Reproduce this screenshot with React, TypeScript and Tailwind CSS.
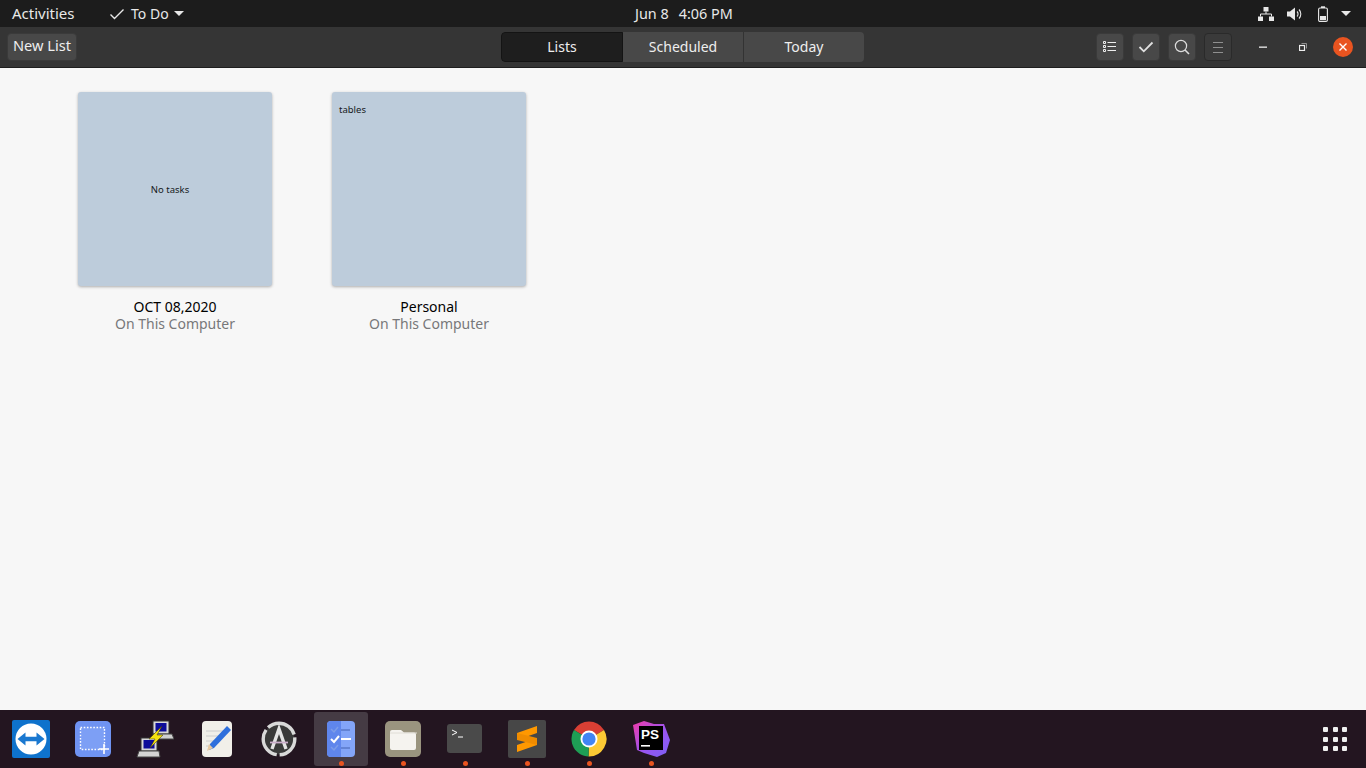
const ui = "font-['Noto_Sans',sans-serif]";

function TopBar() {
  return (
    <div className="relative flex h-[27px] items-center bg-[#1c1c1c] text-[14.4px] text-[#e8e8e8]">
      <span className="ml-3 w-[97px] text-[15px]">Activities</span>
      <svg width="16" height="12" viewBox="0 0 16 12" fill="none" stroke="#e8e8e8" strokeWidth="1.4">
        <path d="M1.5 6.5 5.5 10.500 14.500 1.500" />
      </svg>
      <span className="ml-[6px] text-[14px]">To Do</span>
      <svg width="10" height="5" viewBox="0 0 10 5" className="ml-[5px]">
        <path d="M0 0h10L5 5z" fill="#e8e8e8" />
      </svg>
      <div className="absolute left-[635px] top-0 flex h-[27px] items-center gap-[10px] whitespace-nowrap">
        <span>Jun 8</span>
        <span>4:06 PM</span>
      </div>
      <div className="ml-auto flex items-center">
        <svg width="16" height="14" viewBox="0 0 16 14" fill="#e8e8e8">
          <path d="M5.5 0h5v4.5h-5zM0 9.5h5V14H0zM11 9.5h5V14h-5z" />
          <path d="M8 4.5v2.5M2.5 9.5V7h11v2.5" fill="none" stroke="#e8e8e8" />
        </svg>
        <svg width="16" height="14" viewBox="0 0 16 14" className="ml-[13px]" fill="#e8e8e8">
          <path d="M0 4.5h3L8 .5v13l-5-4H0z" />
          <path d="M10 4.5a3.5 3.5 0 0 1 0 5M12 2.5a6.5 6.5 0 0 1 0 9" fill="none" stroke="#e8e8e8" strokeWidth="1.1" />
        </svg>
        <svg width="10" height="16" viewBox="0 0 10 16" className="ml-[15px]">
          <rect x=".6" y="2" width="8.8" height="13.4" rx="1.4" fill="none" stroke="#e8e8e8" strokeWidth="1.1" />
          <rect x="3" y=".3" width="4" height="1.7" fill="#e8e8e8" />
          <rect x="2" y="10" width="6" height="4" fill="#e8e8e8" />
        </svg>
        <svg width="10" height="5" viewBox="0 0 10 5" className="ml-[13px] mr-[15px]">
          <path d="M0 0h10L5 5z" fill="#e8e8e8" />
        </svg>
      </div>
    </div>
  );
}

function IconButton({ flat, children }: { flat?: boolean; children: React.ReactNode }) {
  return (
    <div
      className={
        "flex h-[28px] w-[28px] items-center justify-center rounded-[4px] border " +
        (flat ? "border-[#2a2a2a] bg-[#3a3a3a]" : "border-[#3a3a3a] bg-[#484848]")
      }
    >
      {children}
    </div>
  );
}

function HeaderBar() {
  return (
    <div className="relative flex h-[41px] items-center border-b border-[#1e1e1e] bg-[#353535] text-[14px] text-[#eeeeee]">
      <div className="ml-[7px] flex h-[28px] w-[70px] items-center justify-center rounded-[4px] border border-[#3a3a3a] bg-[#484848] pb-[2px] text-[14.6px]">
        New List
      </div>
      <div className="absolute left-[501px] top-[5px] flex h-[30px] w-[363px] overflow-hidden rounded-[4px]">
        <div className="flex w-[122px] items-center justify-center rounded-l-[4px] border border-[#141414] bg-[#1e1e1e] pb-[2px]">Lists</div>
        <div className="flex w-[121px] items-center justify-center border-r border-[#333333] bg-[#484848] pb-[2px]">Scheduled</div>
        <div className="flex w-[120px] items-center justify-center bg-[#484848] pb-[2px]">Today</div>
      </div>
      <div className="ml-auto flex items-center">
        <div className="-ml-px flex gap-2">
          <IconButton>
            <svg width="14" height="12" viewBox="0 0 14 12" fill="none" stroke="#eeeeee">
              <path d="M.5.5h2v2h-2zM.5 4.5h2v2h-2zM.5 8.5h2v2h-2zM4.5 1.5H13M4.5 5.5H13M4.5 9.5H13" />
            </svg>
          </IconButton>
          <IconButton>
            <svg width="16" height="12" viewBox="0 0 16 12" fill="none" stroke="#e0e0e0" strokeWidth="1.8">
              <path d="M1.5 6 5.8 10.3 14.5 1.5" />
            </svg>
          </IconButton>
          <IconButton>
            <svg width="16" height="16" viewBox="0 0 16 16" fill="none" stroke="#dddddd" strokeWidth="1.2">
              <circle cx="7" cy="7" r="5.6" />
              <path d="M11 11l4 4" strokeWidth="1.6" />
            </svg>
          </IconButton>
          <IconButton flat>
            <svg width="12" height="11" viewBox="0 0 12 11" fill="none" stroke="#8f8f8f">
              <path d="M1 .5h10M1 5.500h10M1 10.500h10" />
            </svg>
          </IconButton>
        </div>
        <svg width="8" height="2" viewBox="0 0 8 2" className="ml-[27px]">
          <rect width="8" height="1.3" y=".5" fill="#eeeeee" />
        </svg>
        <svg width="8" height="8" viewBox="0 0 8 8" className="ml-[32px]" fill="none" stroke="#eeeeee">
          <rect x=".5" y="2.5" width="5" height="5" strokeWidth="1.2" />
          <path d="M2.5.5h5v5" strokeWidth=".8" stroke="#aaaaaa" />
        </svg>
        <div className="ml-[26px] mr-[13px] flex h-5 w-5 items-center justify-center rounded-full bg-[#e95420]">
          <svg width="8" height="8" viewBox="0 0 8 8" stroke="#ffffff" strokeWidth="1.4">
            <path d="M.5.5l7 7M7.5.5l-7 7" />
          </svg>
        </div>
      </div>
    </div>
  );
}

function ListCard({ name, children, center }: { name: string; children: string; center?: boolean }) {
  return (
    <div className="w-[194px] text-center">
      <div
        className={
          "flex h-[194px] rounded-[3px] bg-[#bdccdb] text-[9.5px] text-[#16191c] shadow-[0_1px_3px_rgba(0,0,0,0.3)] " +
          (center ? "items-center justify-center pr-[10px] pt-[2px]" : "items-start px-[7px] py-[11px]")
        }
      >
        {children}
      </div>
      <div className="mt-[12px] text-[14px] leading-[17px] text-black">{name}</div>
      <div className="text-[14px] leading-[17px] text-[#77787a]">On This Computer</div>
    </div>
  );
}

function Content() {
  return (
    <div className="flex flex-1 gap-[60px] bg-[#f7f7f7] pl-[78px] pt-[24px]">
      <ListCard name="OCT 08,2020" center>No tasks</ListCard>
      <ListCard name="Personal">tables</ListCard>
    </div>
  );
}

function DockItem({ dot, active, children }: { dot?: boolean; active?: boolean; children: React.ReactNode }) {
  return (
    <div className="relative flex h-[58px] w-[62px] items-center justify-center">
      {active && <div className="absolute inset-x-1 bottom-[2px] top-[2px] rounded-[3px] bg-[#453b44]" />}
      <div className="relative flex h-9 w-9 items-center justify-center">{children}</div>
      {dot && <div className="absolute bottom-[2px] left-[29px] h-[5px] w-[5px] rounded-full bg-[#e95420]" />}
    </div>
  );
}

function Dock() {
  return (
    <div className="flex h-[58px] items-center bg-[#231520]">
      <DockItem>
        <svg width="38" height="38" viewBox="0 0 38 38" className="shrink-0">
          <rect width="38" height="38" rx="2" fill="#0e72cc" />
          <circle cx="19" cy="19" r="15.5" fill="#ffffff" />
          <path d="M5.5 19l8-6.5v4.2h11v-4.2l8 6.5-8 6.500v-4.200h-11v4.200z" fill="#1a78d0" />
        </svg>
      </DockItem>
      <DockItem>
        <svg width="36" height="36" viewBox="0 0 36 36">
          <rect width="36" height="36" rx="5" fill="#6f93f2" />
          <rect x="5.5" y="6.5" width="24" height="22" fill="#7d9ff5" stroke="#ffffff" strokeWidth="1.4" strokeDasharray="1.6 1.6" />
          <path d="M24 28h10M29 23v10" stroke="#ffffff" strokeWidth="1.6" />
        </svg>
      </DockItem>
      <DockItem>
        <svg width="38" height="38" viewBox="0 0 38 38" className="shrink-0">
          <rect x="17" y="1" width="16" height="13" fill="#d8d8d8" stroke="#333333" />
          <rect x="19.5" y="3" width="11" height="8.5" fill="#0d0d9a" />
          <path d="M17 14h19l2 5H19z" fill="#cfcfcf" stroke="#444444" />
          <rect x="5" y="18" width="16" height="13" fill="#d8d8d8" stroke="#333333" />
          <rect x="7.5" y="20" width="11" height="8.5" fill="#0d0d9a" />
          <path d="M3 31h20l1 6H1z" fill="#d4d4d4" stroke="#444444" />
          <path d="M26 6 13 19h6l-5 9 13-13h-6z" fill="#f5e210" stroke="#3a3300" strokeWidth=".5" />
        </svg>
      </DockItem>
      <DockItem>
        <svg width="30" height="36" viewBox="0 0 30 36">
          <rect width="30" height="36" rx="4" fill="#f1efe9" />
          <path d="M4 10h18M4 15h14M4 20h10M4 25h6" stroke="#cccccc" />
          <path d="M25 5l4 4-17 18-5 2 1-6z" fill="#2f6fdc" />
          <path d="M7 23l4 4-6 3z" fill="#e8c9a0" />
        </svg>
      </DockItem>
      <DockItem>
        <svg width="36" height="36" viewBox="0 0 36 36" fill="none">
          <circle cx="18" cy="18" r="15.5" fill="#3a3a3a" />
          <circle cx="18" cy="18" r="15.8" stroke="#d9d9d9" strokeWidth="3.4" strokeDasharray="24 3 32 3 32 3" />
          <path d="M11 28 18 8l7 20" stroke="#e4e4e4" strokeWidth="3.4" />
          <path d="M9 21.5h18" stroke="#cbaecb" strokeWidth="1.8" />
        </svg>
      </DockItem>
      <DockItem active dot>
        <svg width="28" height="36" viewBox="0 0 28 36">
          <rect width="28" height="36" rx="4" fill="#83a5f8" />
          <path d="M4 0h10v36H4a4 4 0 0 1-4-4V4a4 4 0 0 1 4-4z" fill="#5f86ec" />
          <path d="M4 8l3 3 4-5M4 26l3 3 4-5" fill="none" stroke="#7c9ce8" strokeWidth="1.5" />
          <path d="M4 18l3 3 5-6" fill="none" stroke="#ffffff" strokeWidth="2" />
          <path d="M14 9h9M14 27h9" stroke="#5a78c8" strokeWidth="1.5" />
          <path d="M14 18h10" stroke="#ffffff" strokeWidth="2" />
        </svg>
      </DockItem>
      <DockItem dot>
        <svg width="36" height="36" viewBox="0 0 36 36">
          <rect width="36" height="36" rx="5" fill="#9a947f" />
          <path d="M5 11a2 2 0 0 1 2-2h9l3 2.5h10a2 2 0 0 1 2 2V27a2 2 0 0 1-2 2H7a2 2 0 0 1-2-2z" fill="#f5f3ef" />
          <path d="M5 12h27" stroke="#e0ddd6" />
        </svg>
      </DockItem>
      <DockItem dot>
        <svg width="36" height="30" viewBox="0 0 36 30">
          <rect width="35" height="29" rx="3" fill="#4a4a4a" />
          <path d="M5 6l5 2.5L5 11" fill="none" stroke="#ffffff" strokeWidth="1" />
          <path d="M11 13h5" stroke="#ffffff" strokeWidth="1" />
        </svg>
      </DockItem>
      <DockItem dot>
        <svg width="38" height="38" viewBox="0 0 38 38" className="shrink-0">
          <rect width="38" height="38" rx="2" fill="#474747" />
          <path d="M29 6v7L9 20v-7zM29 18v7L9 32v-7z" fill="#ff9800" />
          <path d="M9 13l20 5v7L9 20z" fill="#f08c00" />
        </svg>
      </DockItem>
      <DockItem dot>
        <svg width="36" height="36" viewBox="0 0 36 36">
          <path d="M18 18 3 9a17.5 17.5 0 0 1 30 0z" fill="#d93f34" />
          <path d="M18 18l15-9a17.5 17.5 0 0 1-15.500 26.500z" fill="#fcc934" />
          <path d="M18 18 17.500 35.500A17.5 17.5 0 0 1 3 9z" fill="#1e9e55" />
          <circle cx="18" cy="18" r="8.5" fill="#ffffff" />
          <circle cx="18" cy="18" r="6.6" fill="#4285f4" />
        </svg>
      </DockItem>
      <DockItem dot>
        <svg width="38" height="38" viewBox="0 0 38 38" className="shrink-0">
          <defs>
            <linearGradient id="ps" x1="0" y1="0" x2="1" y2="1">
              <stop offset="0" stopColor="#f03aa8" />
              <stop offset="0.55" stopColor="#9a55f0" />
              <stop offset="1" stopColor="#7a60f5" />
            </linearGradient>
          </defs>
          <path d="M1 5 12 1l10 3 10 0 6 16-4 13-9 4-13-4-7-3z" fill="url(#ps)" />
          <rect x="7" y="6" width="24" height="24" fill="#000000" />
          <text x="9" y="19" fontFamily="Liberation Sans" fontWeight="700" fontSize="13.5" fill="#ffffff">PS</text>
          <rect x="9" y="25" width="9" height="1.6" fill="#ffffff" />
        </svg>
      </DockItem>
      <div className="ml-auto mr-[19px] grid grid-cols-3 gap-[4.5px]">
        {Array.from({ length: 9 }).map((_, i) => (
          <div key={i} className="h-[5px] w-[5px] rounded-[1px] bg-[#f0f0f0]" />
        ))}
      </div>
    </div>
  );
}

export default function App() {
  return (
    <div className={"flex h-[768px] w-[1366px] flex-col overflow-hidden " + ui}>
      <TopBar />
      <HeaderBar />
      <Content />
      <div className="h-[1px] bg-[#f7f7f7]" />
      <Dock />
    </div>
  );
}
